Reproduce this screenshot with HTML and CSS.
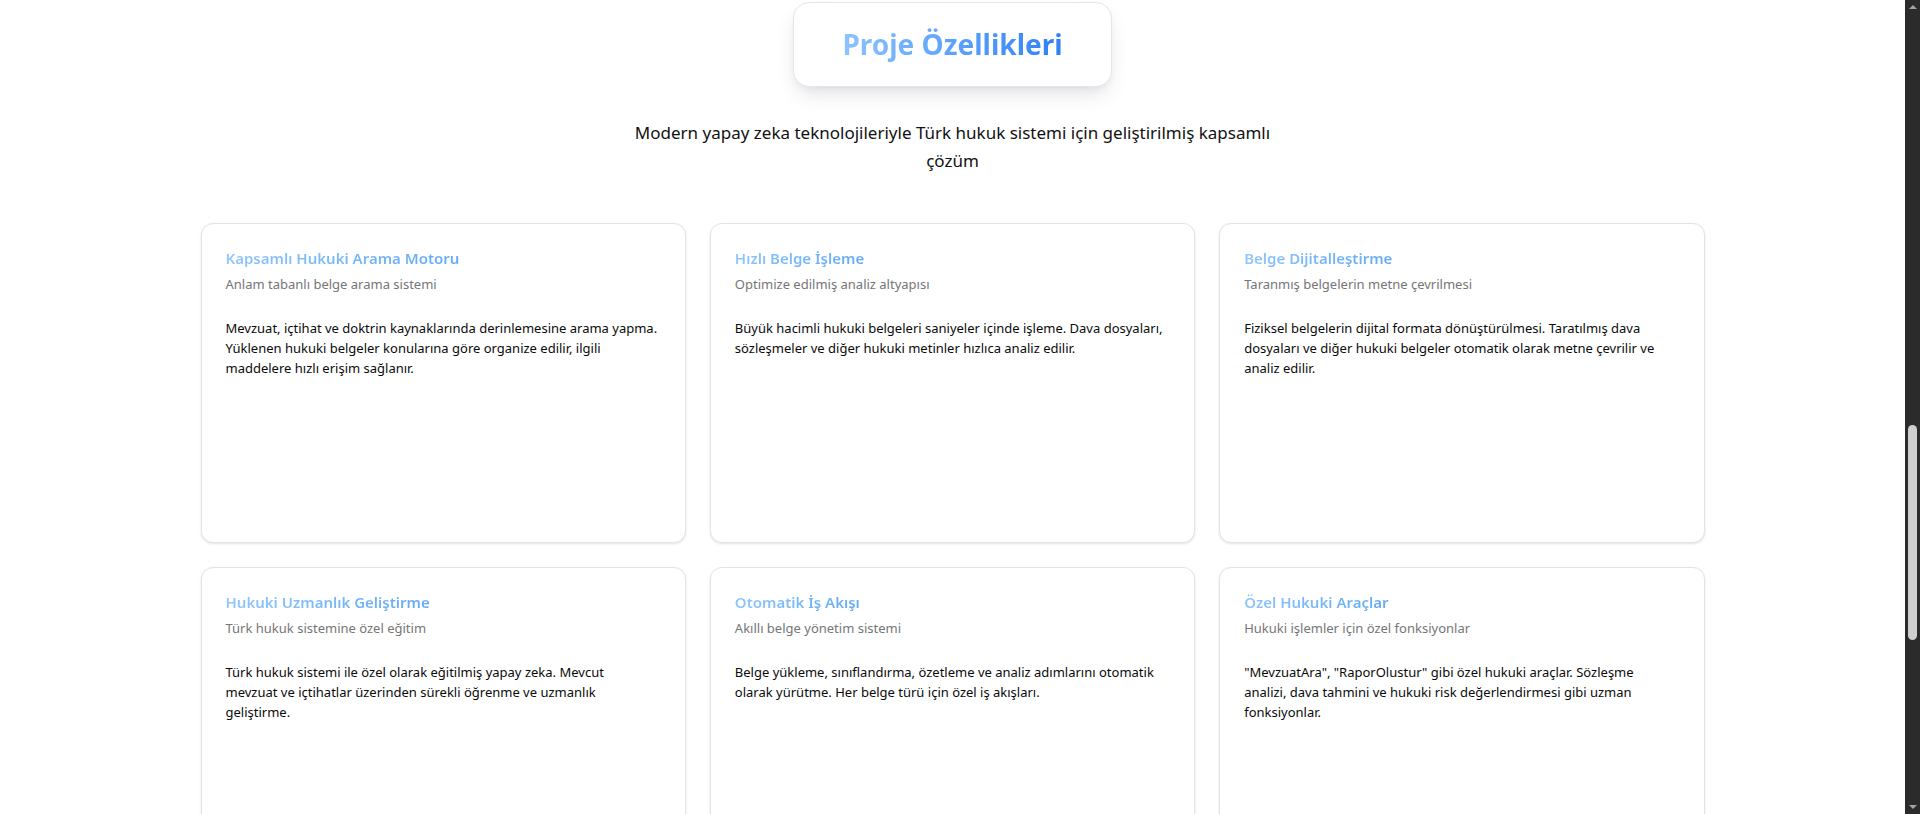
FILE: index.html
```html
<!DOCTYPE html>
<html lang="tr">
<head>
<meta charset="utf-8">
<title>Proje Özellikleri</title>
<link rel="stylesheet" href="styles.css">
</head>
<body>
<div class="window">
  <main class="page">
    <section class="features">
      <div class="heading-wrap">
        <h2 class="heading-card"><span class="heading-text">Proje Özellikleri</span></h2>
      </div>
      <p class="lead">Modern yapay zeka teknolojileriyle Türk hukuk sistemi için geliştirilmiş kapsamlı çözüm</p>
      <div class="grid">
        <article class="card">
          <header class="card-header">
            <h3 class="card-title">Kapsamlı Hukuki Arama Motoru</h3>
            <p class="card-desc">Anlam tabanlı belge arama sistemi</p>
          </header>
          <div class="card-body">Mevzuat, içtihat ve doktrin kaynaklarında derinlemesine arama yapma.<br>Yüklenen hukuki belgeler konularına göre organize edilir, ilgili<br>maddelere hızlı erişim sağlanır.</div>
        </article>
        <article class="card">
          <header class="card-header">
            <h3 class="card-title">Hızlı Belge İşleme</h3>
            <p class="card-desc">Optimize edilmiş analiz altyapısı</p>
          </header>
          <div class="card-body">Büyük hacimli hukuki belgeleri saniyeler içinde işleme. Dava dosyaları,<br>sözleşmeler ve diğer hukuki metinler hızlıca analiz edilir.</div>
        </article>
        <article class="card">
          <header class="card-header">
            <h3 class="card-title">Belge Dijitalleştirme</h3>
            <p class="card-desc">Taranmış belgelerin metne çevrilmesi</p>
          </header>
          <div class="card-body">Fiziksel belgelerin dijital formata dönüştürülmesi. Taratılmış dava<br>dosyaları ve diğer hukuki belgeler otomatik olarak metne çevrilir ve<br>analiz edilir.</div>
        </article>
        <article class="card">
          <header class="card-header">
            <h3 class="card-title">Hukuki Uzmanlık Geliştirme</h3>
            <p class="card-desc">Türk hukuk sistemine özel eğitim</p>
          </header>
          <div class="card-body">Türk hukuk sistemi ile özel olarak eğitilmiş yapay zeka. Mevcut<br>mevzuat ve içtihatlar üzerinden sürekli öğrenme ve uzmanlık<br>geliştirme.</div>
        </article>
        <article class="card">
          <header class="card-header">
            <h3 class="card-title">Otomatik İş Akışı</h3>
            <p class="card-desc">Akıllı belge yönetim sistemi</p>
          </header>
          <div class="card-body">Belge yükleme, sınıflandırma, özetleme ve analiz adımlarını otomatik<br>olarak yürütme. Her belge türü için özel iş akışları.</div>
        </article>
        <article class="card">
          <header class="card-header">
            <h3 class="card-title">Özel Hukuki Araçlar</h3>
            <p class="card-desc">Hukuki işlemler için özel fonksiyonlar</p>
          </header>
          <div class="card-body">"MevzuatAra", "RaporOlustur" gibi özel hukuki araçlar. Sözleşme<br>analizi, dava tahmini ve hukuki risk değerlendirmesi gibi uzman<br>fonksiyonlar.</div>
        </article>
      </div>
    </section>
  </main>
  <div class="scrollbar" aria-hidden="true">
    <div class="sb-arrow sb-up"></div>
    <div class="sb-track"><div class="sb-thumb"></div></div>
    <div class="sb-arrow sb-down"></div>
  </div>
</div>
</body>
</html>
```

FILE: styles.css
```css
* { box-sizing: border-box; }

html, body {
  margin: 0;
  padding: 0;
  height: 100%;
  background: #ffffff;
}

body {
  font-family: "Noto Sans", "Open Sans", sans-serif;
  color: #0a0a0a;
  overflow: hidden;
}

.window {
  display: flex;
  height: 814px;
  overflow: hidden;
}

.page {
  flex: 1;
  min-width: 0;
  overflow: hidden;
}

.features {
  max-width: 1536px;
  margin: 0 auto;
  padding: 2px 16px 0;
  display: flex;
  flex-direction: column;
  align-items: center;
}

.heading-wrap {
  display: flex;
  justify-content: center;
}

.heading-card {
  margin: 0;
  padding: 24px 48px;
  background: #ffffff;
  border: 1px solid #e6e6ea;
  border-radius: 16px;
  box-shadow: 0 10px 20px -4px rgba(60, 60, 90, 0.14), 0 4px 10px -4px rgba(0, 0, 0, 0.08);
  font-size: 28px;
  line-height: 35px;
  font-weight: 700;
}

.heading-text {
  background: linear-gradient(90deg, #8cc4ff 0%, #2f80f7 100%);
  -webkit-background-clip: text;
  background-clip: text;
  color: transparent;
}

.lead {
  max-width: 672px;
  margin: 32px 0 48px;
  text-align: center;
  font-size: 17px;
  line-height: 28px;
  color: #111111;
}

.grid {
  width: 100%;
  display: grid;
  grid-template-columns: repeat(3, 1fr);
  gap: 24px;
}

.card {
  height: 320px;
  background: #ffffff;
  border: 1px solid #e4e4e7;
  border-radius: 12px;
  box-shadow: 0 1px 3px rgba(0, 0, 0, 0.08), 0 1px 2px rgba(0, 0, 0, 0.04);
}

.card-header {
  padding: 24px;
  display: flex;
  flex-direction: column;
  gap: 6px;
}

.card-title {
  margin: 0;
  font-size: 15px;
  line-height: 20px;
  font-weight: 600;
  align-self: flex-start;
  background: linear-gradient(90deg, #8fc6fd 0%, #62aaf6 100%);
  -webkit-background-clip: text;
  background-clip: text;
  color: transparent;
}

.card-desc {
  margin: 0;
  font-size: 13px;
  line-height: 20px;
  color: #767676;
}

.card-body {
  padding: 0 24px 24px;
  font-size: 13px;
  line-height: 20px;
  color: #0a0a0a;
}

/* imitation of the browser scrollbar at the right edge */
.scrollbar {
  width: 15px;
  flex: none;
  background: #2b2b2b;
  display: flex;
  flex-direction: column;
  align-items: center;
}

.sb-arrow {
  flex: none;
  width: 0;
  height: 0;
  border-left: 4px solid transparent;
  border-right: 4px solid transparent;
}

.sb-up {
  margin-top: 5px;
  border-bottom: 4px solid #a3a3a3;
}

.sb-down {
  margin-bottom: 5px;
  border-top: 4px solid #a3a3a3;
}

.sb-track {
  flex: 1;
  width: 100%;
  display: flex;
  justify-content: center;
}

.sb-thumb {
  width: 9px;
  height: 215px;
  margin-top: 416px;
  border-radius: 5px;
  background: #cfcfcf;
}
```
